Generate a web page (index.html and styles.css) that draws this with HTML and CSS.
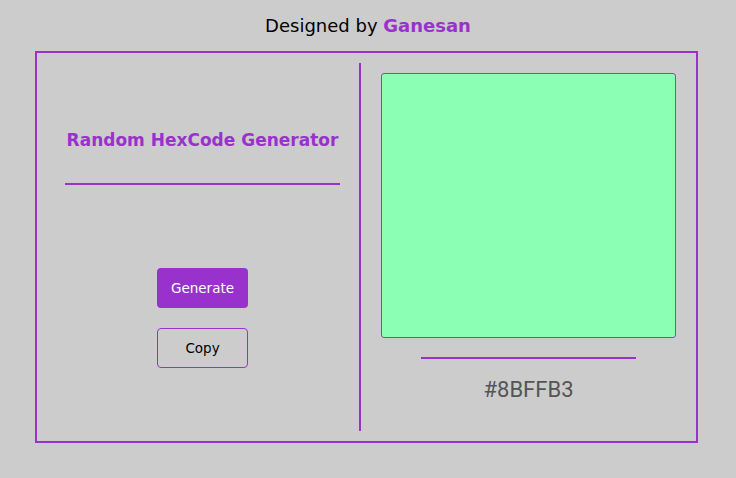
FILE: index.html
```html
<!DOCTYPE html>
<html>
<head>
<meta charset="utf-8">
<link rel="stylesheet" href="styles.css">
</head>
<body>
<p class="credit">Designed by <span class="name">Ganesan</span></p>
<div class="box">
  <div class="left">
    <h2 class="heading">Random HexCode Generator</h2>
    <div class="rule"></div>
    <button class="btn gen">Generate</button>
    <button class="btn copy">Copy</button>
  </div>
  <div class="right">
    <div class="swatch"></div>
    <div class="rule2"></div>
    <p class="hex">#8BFFB3</p>
  </div>
</div>
</body>
</html>
```
FILE: styles.css
```css
html, body { margin: 0; padding: 0; }
body {
  background: #cccccc;
  font-family: "DejaVu Sans", "Open Sans", sans-serif;
  color: #000;
  width: 736px;
  height: 478px;
}
.credit {
  margin: 0;
  padding-top: 14px;
  height: 51px;
  box-sizing: border-box;
  text-align: center;
  font-size: 18px;
  line-height: 24px;
}
.name { color: #9932cc; font-weight: 600; }
.box {
  margin: 0 0 0 35px;
  width: 663px;
  height: 392px;
  box-sizing: border-box;
  border: 2px solid #9932cc;
  padding: 10px 0;
  display: flex;
}
.left {
  width: 322px;
  padding-left: 9px;
  box-sizing: border-box;
  display: flex;
  flex-direction: column;
  align-items: center;
}
.heading {
  margin: 65px 0 0;
  font-size: 17px;
  line-height: 24px;
  font-weight: 700;
  color: #9932cc;
  white-space: nowrap;
}
.rule {
  margin-top: 31px;
  width: 275px;
  height: 2px;
  background: #9932cc;
}
.btn {
  width: 91px;
  height: 40px;
  box-sizing: border-box;
  border-radius: 4px;
  font-family: "DejaVu Sans", "Open Sans", sans-serif;
  font-size: 13.5px;
  cursor: pointer;
}
.gen {
  margin-top: 83px;
  background: #9932cc;
  color: #fff;
  border: none;
}
.copy {
  margin-top: 20px;
  background: transparent;
  color: #000;
  border: 1px solid #9932cc;
}
.right {
  flex: 1;
  border-left: 2px solid #9932cc;
  display: flex;
  flex-direction: column;
  align-items: center;
}
.swatch {
  margin-top: 10px;
  width: 295px;
  height: 265px;
  box-sizing: border-box;
  background: #8bffb3;
  border: 1px solid #8a4ab0;
  border-radius: 3px;
}
.rule2 {
  margin-top: 19px;
  width: 215px;
  height: 2px;
  background: #9932cc;
}
.hex {
  margin: 19px 0 0;
  font-family: Roboto, "Noto Sans", sans-serif;
  font-size: 22px;
  line-height: 24px;
  color: #555555;
}
```
